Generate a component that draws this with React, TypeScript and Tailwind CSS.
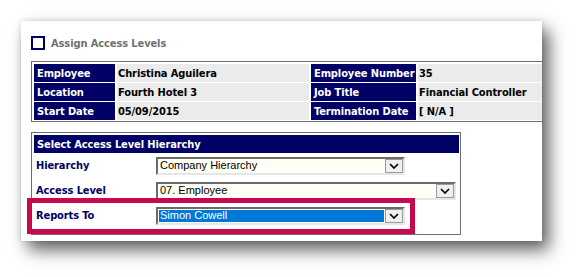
import React from "react";

const bold = "font-['DejaVu_Sans_Condensed','DejaVu_Sans',sans-serif] font-bold text-[11px] leading-none tracking-[-0.1px]";

type InfoRow = { label: string; value: string; label2: string; value2: string };

const infoRows: InfoRow[] = [
  { label: "Employee", value: "Christina Aguilera", label2: "Employee Number", value2: "35" },
  { label: "Location", value: "Fourth Hotel 3", label2: "Job Title", value2: "Financial Controller" },
  { label: "Start Date", value: "05/09/2015", label2: "Termination Date", value2: "[ N/A ]" },
];

function Label({ text }: { text: string }) {
  return (
    <div className={`h-[18px] bg-[#000066] text-white flex items-center pl-[3px] whitespace-nowrap overflow-hidden ${bold}`}>
      {text}
    </div>
  );
}

function Value({ text }: { text: string }) {
  return (
    <div className={`h-[18px] bg-[#ebebeb] text-black flex items-center pl-[1px] ${bold} whitespace-nowrap`}>
      {text}
    </div>
  );
}

function Chevron() {
  return (
    <svg width="10" height="6" viewBox="0 0 10 6">
      <path d="M1 1 L5 5 L9 1" fill="none" stroke="#000" strokeWidth="1.7" />
    </svg>
  );
}

function FakeSelect({
  value,
  width,
  selected = false,
}: {
  value: string;
  width: string;
  selected?: boolean;
}) {
  return (
    <div
      className={`${width} h-[18px] flex border-t-2 border-l-2 border-[#6b6b6b] border-r-2 border-b-2 border-r-[#e6e6e6] border-b-[#e6e6e6] bg-[#fffff5]`}
    >
      <div className="flex-1 flex items-stretch p-[1px] min-w-0">
        <div
          className={`flex-1 flex items-center pl-[1px] font-['Liberation_Sans',Arial,sans-serif] text-[11px] leading-none ${
            selected ? "bg-[#0078d7] text-white" : "text-black"
          }`}
        >
          {value}
        </div>
      </div>
      <div className="w-[18px] h-[14px] bg-[#f0f0f0] border border-[#9a9a9a] flex items-center justify-center">
        <Chevron />
      </div>
    </div>
  );
}

export default function App() {
  return (
    <div className="w-[584px] h-[277px] bg-white pt-[21px] pl-[21px]">
      <div className="relative w-[521px] h-[220px] bg-white overflow-hidden shadow-[7px_9px_16px_rgba(0,0,0,0.62),0_0_5px_rgba(0,0,0,0.14)] pt-[15px] pl-[10px]">
        <div className="flex items-center gap-[6px] h-[14px]">
          <div className="w-[14px] h-[14px] border-2 border-[#000066] bg-white" />
          <span className={`${bold} text-[#707070] text-[11.5px]`}>Assign Access Levels</span>
        </div>

        <div className="mt-[11px] w-[540px] border border-[#6e6e6e] pt-[2px] pl-[2px] pb-[1px] grid grid-cols-[81px_192px_105px_1fr] gap-x-[2px] gap-y-[1px]">
          {infoRows.map((r) => (
            <React.Fragment key={r.label}>
              <Label text={r.label} />
              <Value text={r.value} />
              <Label text={r.label2} />
              <Value text={r.value2} />
            </React.Fragment>
          ))}
        </div>

        <div className="mt-[10px] w-[430px] border border-[#6e6e6e] pt-[2px] pl-[2px] pr-[1px] pb-[6px]">
          <div className={`h-[18px] bg-[#000066] text-white flex items-center pl-[3px] ${bold}`}>
            Select Access Level Hierarchy
          </div>
          {[
            { label: "Hierarchy", value: "Company Hierarchy", w: "w-[249px]", sel: false },
            { label: "Access Level", value: "07. Employee", w: "w-[300px]", sel: false },
            { label: "Reports To", value: "Simon Cowell", w: "w-[249px]", sel: true },
          ].map((row) => (
            <div key={row.label} className="h-[25px] flex items-center">
              <div className={`w-[122px] pl-[2px] text-[#000066] ${bold}`}>{row.label}</div>
              <FakeSelect value={row.value} width={row.w} selected={row.sel} />
            </div>
          ))}
        </div>

        <div className="absolute left-[6px] top-[177px] w-[388px] h-[36px] border-[5px] border-[#c8084f]" />
      </div>
    </div>
  );
}
